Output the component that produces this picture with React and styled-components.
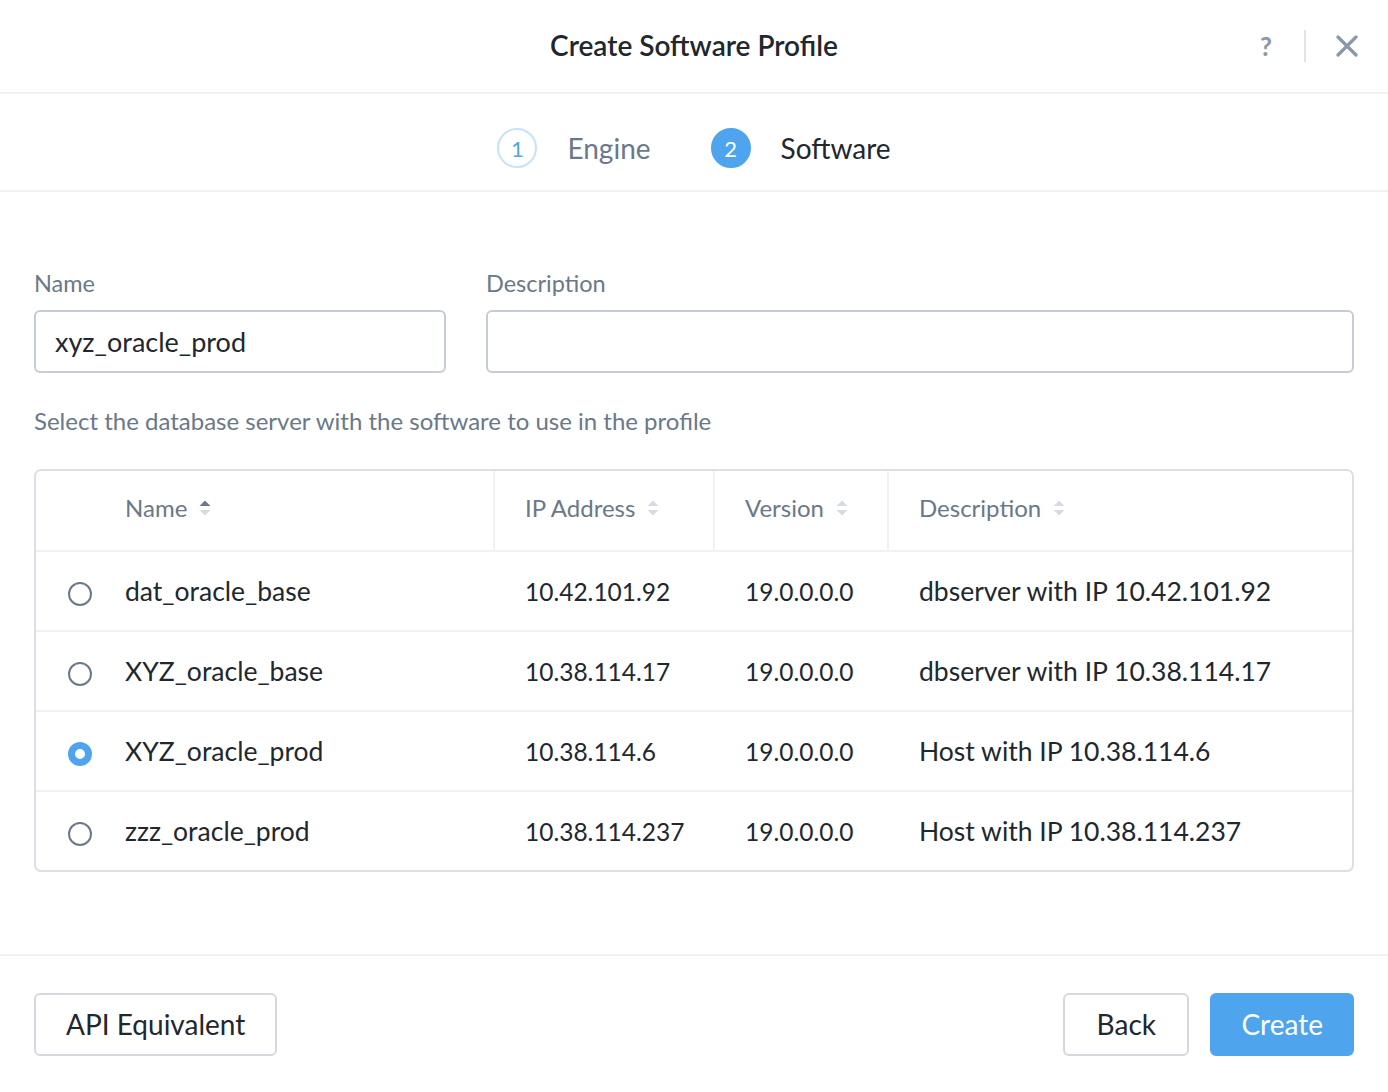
import React from "react";
import styled, { createGlobalStyle } from "styled-components";

const GlobalStyle = createGlobalStyle`
  html, body {
    margin: 0;
    padding: 0;
    background: #fff;
  }
  body {
    font-family: "Lato", "Open Sans", sans-serif;
    color: #22272e;
  }
`;

const Dialog = styled.div`
  width: 1388px;
  height: 1092px;
  display: flex;
  flex-direction: column;
  background: #fff;
`;

// top bar with title
const Header = styled.div`
  height: 92px;
  border-bottom: 2px solid #f0f1f3;
  display: flex;
  align-items: center;
  justify-content: center;
  position: relative;
`;

const Title = styled.h1`
  margin: 0 0 3px 0;
  font-size: 28px;
  font-weight: 600;
  color: #22272e;
`;

const HeaderTools = styled.div`
  position: absolute;
  right: 30px;
  top: 28px;
  display: flex;
  align-items: center;
  height: 36px;
`;

const HelpIcon = styled.span`
  font-size: 26px;
  font-weight: 700;
  color: #8a97a8;
  width: 24px;
  text-align: center;
`;

const ToolDivider = styled.span`
  width: 2px;
  height: 32px;
  background: #dfe3e8;
  margin: 0 30px 0 26px;
`;

// stepper
const Steps = styled.div`
  height: 98px;
  border-bottom: 2px solid #f0f1f3;
  display: flex;
  align-items: center;
  justify-content: center;
  gap: 60px;
  padding-top: 12px;
  box-sizing: border-box;
`;

const Step = styled.div`
  display: flex;
  align-items: center;
  gap: 30px;
`;

const StepNum = styled.span`
  width: 36px;
  height: 36px;
  border-radius: 50%;
  display: flex;
  align-items: center;
  justify-content: center;
  font-size: 22px;
  border: 2px solid ${(p) => (p.active ? "#4ea5ee" : "#c5e2fb")};
  background: ${(p) => (p.active ? "#4ea5ee" : "#fff")};
  color: ${(p) => (p.active ? "#fff" : "#4ea5ee")};
`;

const StepLabel = styled.span`
  font-size: 28px;
  color: ${(p) => (p.active ? "#22272e" : "#6a7889")};
`;

const Body = styled.div`
  flex: 1;
  padding: 78px 34px 0 34px;
  border-bottom: 2px solid #f0f1f3;
`;

const FieldRow = styled.div`
  display: grid;
  grid-template-columns: 412px 1fr;
  gap: 40px;
`;

const Field = styled.div`
  display: flex;
  flex-direction: column;
`;

const Label = styled.label`
  font-size: 23.5px;
  color: #6a7889;
  margin-bottom: 14px;
  line-height: 26px;
`;

const Input = styled.input`
  height: 63px;
  box-sizing: border-box;
  border: 2px solid #c6ccd4;
  border-radius: 6px;
  padding: 0 19px;
  font-family: inherit;
  font-size: 27px;
  color: #22272e;
  outline: none;
`;

const Hint = styled.p`
  margin: 34px 0 34px;
  font-size: 24px;
  line-height: 28px;
  color: #6a7889;
`;

const Table = styled.div`
  border: 2px solid #dcdfe5;
  border-radius: 7px;
  overflow: hidden;
`;

const Row = styled.div`
  display: grid;
  grid-template-columns: 89px 370px 220px 174px 1fr;
  height: ${(p) => (p.head ? "79px" : "80px")};
  padding-bottom: ${(p) => (p.head ? "6px" : "0")};
  border-top: ${(p) => (p.head ? "none" : "2px solid #f0f1f3")};
  box-sizing: border-box;
  align-items: stretch;
`;

const Cell = styled.div`
  display: flex;
  align-items: center;
  padding-left: ${(p) => (p.pad ? "30px" : "0")};
  border-right: ${(p) => (p.divider ? "2px solid #f0f1f3" : "none")};
  font-size: ${(p) => (p.num ? "24.5px" : "26.5px")};
  color: #22272e;
`;

const HeadCell = styled(Cell)`
  margin-bottom: -6px;
  padding-bottom: 6px;
`;

const HeadText = styled.span`
  font-size: 24px;
  color: #6a7889;
`;

const RadioCell = styled.div`
  display: flex;
  align-items: center;
  justify-content: flex-end;
  padding-right: 33px;
  padding-top: 6px;
`;

const Radio = styled.span`
  width: 24px;
  height: 24px;
  box-sizing: border-box;
  border-radius: 50%;
  border: ${(p) => (p.checked ? "7px solid #4ea5ee" : "2px solid #6a7889")};
  background: #fff;
`;

const Footer = styled.div`
  height: 136px;
  display: flex;
  align-items: center;
  justify-content: space-between;
  padding: 0 34px;
`;

const ButtonGroup = styled.div`
  display: flex;
  gap: 21px;
`;

const Button = styled.button`
  height: 63px;
  padding: 0 ${(p) => p.px || "30px"};
  border-radius: 6px;
  font-family: inherit;
  font-size: 28px;
  cursor: pointer;
  border: 2px solid ${(p) => (p.primary ? "#4ea5ee" : "#d5d9df")};
  background: ${(p) => (p.primary ? "#4ea5ee" : "#fff")};
  color: ${(p) => (p.primary ? "#fff" : "#22272e")};
`;

const SortIcon = ({ active }) => (
  <svg width="14" height="24" viewBox="0 0 14 24" style={{ marginLeft: 11 }}>
    <path d="M1.5 10 L7 4.5 L12.5 10 Z" fill={active ? "#6a7889" : "#d6dae1"} />
    <path d="M1.5 14 L7 19.5 L12.5 14 Z" fill="#d6dae1" />
  </svg>
);

const CloseIcon = () => (
  <svg width="22" height="22" viewBox="0 0 22 22">
    <path d="M2 2 L20 20 M20 2 L2 20" stroke="#8a97a8" strokeWidth="3.2" strokeLinecap="round" />
  </svg>
);

const servers = [
  { name: "dat_oracle_base", ip: "10.42.101.92", version: "19.0.0.0.0", desc: "dbserver with IP 10.42.101.92" },
  { name: "XYZ_oracle_base", ip: "10.38.114.17", version: "19.0.0.0.0", desc: "dbserver with IP 10.38.114.17" },
  { name: "XYZ_oracle_prod", ip: "10.38.114.6", version: "19.0.0.0.0", desc: "Host with IP 10.38.114.6", checked: true },
  { name: "zzz_oracle_prod", ip: "10.38.114.237", version: "19.0.0.0.0", desc: "Host with IP 10.38.114.237" },
];

export default function App() {
  return (
    <Dialog>
      <GlobalStyle />
      <Header>
        <Title>Create Software Profile</Title>
        <HeaderTools>
          <HelpIcon>?</HelpIcon>
          <ToolDivider />
          <CloseIcon />
        </HeaderTools>
      </Header>

      <Steps>
        <Step>
          <StepNum>1</StepNum>
          <StepLabel>Engine</StepLabel>
        </Step>
        <Step>
          <StepNum active>2</StepNum>
          <StepLabel active>Software</StepLabel>
        </Step>
      </Steps>

      <Body>
        <FieldRow>
          <Field>
            <Label>Name</Label>
            <Input defaultValue="xyz_oracle_prod" />
          </Field>
          <Field>
            <Label>Description</Label>
            <Input defaultValue="" />
          </Field>
        </FieldRow>

        <Hint>Select the database server with the software to use in the profile</Hint>

        <Table>
          <Row head>
            <HeadCell />
            <HeadCell divider>
              <HeadText>Name</HeadText>
              <SortIcon active />
            </HeadCell>
            <HeadCell divider pad>
              <HeadText>IP Address</HeadText>
              <SortIcon />
            </HeadCell>
            <HeadCell divider pad>
              <HeadText>Version</HeadText>
              <SortIcon />
            </HeadCell>
            <HeadCell pad>
              <HeadText>Description</HeadText>
              <SortIcon />
            </HeadCell>
          </Row>
          {servers.map((s, i) => (
            <Row key={i}>
              <RadioCell>
                <Radio checked={s.checked} />
              </RadioCell>
              <Cell>{s.name}</Cell>
              <Cell pad num>{s.ip}</Cell>
              <Cell pad num>{s.version}</Cell>
              <Cell pad>{s.desc}</Cell>
            </Row>
          ))}
        </Table>
      </Body>

      <Footer>
        <Button>API Equivalent</Button>
        <ButtonGroup>
          <Button px="31.5px">Back</Button>
          <Button primary px="29px">Create</Button>
        </ButtonGroup>
      </Footer>
    </Dialog>
  );
}
